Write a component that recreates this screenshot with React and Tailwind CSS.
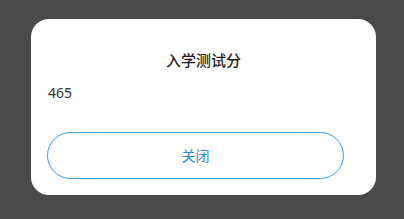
export default function App() {
  return (
    <div
      className="w-[404px] h-[219px] bg-[#4a4a4a] pt-[19px] pl-[31px]"
      style={{ fontFamily: '"Noto Sans", "Noto Sans CJK SC", sans-serif' }}
    >
      <div className="w-[345px] h-[176px] bg-white rounded-[18px] flex flex-col pl-[16px] pr-[32px]">
        <div className="h-[20px] mt-[31px] leading-[20px] text-[15px] font-medium text-[#1f1f1f] text-center pl-[16px]">
          入学测试分
        </div>
        <div className="h-[20px] mt-[13px] leading-[20px] text-[14px] text-[#333333] pl-[1px]">
          465
        </div>
        <button className="mt-[29px] h-[47px] w-[297px] rounded-full border-[1.5px] border-[#3b9ae0] text-[#2a88d4] text-[14px] leading-[20px] flex items-center justify-center">
          关闭
        </button>
      </div>
    </div>
  );
}
